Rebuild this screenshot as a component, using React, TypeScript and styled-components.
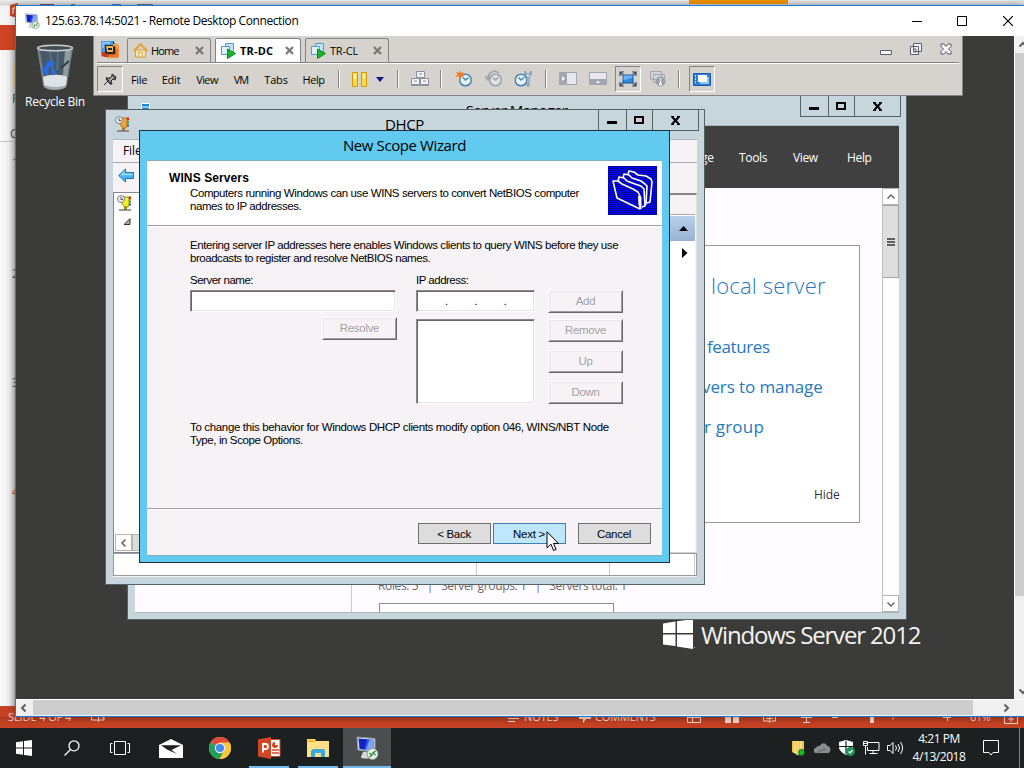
import React from "react";
import styled, { createGlobalStyle, css } from "styled-components";

const GlobalStyle = createGlobalStyle`
  html, body { margin: 0; padding: 0; overflow: hidden; }
  *, *::before, *::after { box-sizing: border-box; }
  svg { display: block; flex: none; }
`;

const ui = `"Open Sans", "Noto Sans", sans-serif`;
const dlg = `"Liberation Sans", Arial, sans-serif`;

/* ---------- screen ---------- */

const Screen = styled.div`
  width: 1024px;
  height: 768px;
  display: flex;
  flex-direction: column;
  overflow: hidden;
  font-family: ${ui};
  font-size: 12px;
  color: #000;
  white-space: nowrap;
  cursor: default;
`;

const Workspace = styled.div`
  position: relative;
  height: 728px;
  overflow: hidden;
`;

/* ---------- PowerPoint behind ---------- */

const Office = styled.div`
  height: 728px;
  display: flex;
  flex-direction: column;
  background: #f8f8f8;
`;
const OfficeTop = styled.div`
  height: 25px;
  padding-left: 9px;
  display: flex;
  background: linear-gradient(#ededed 0, #d3d3d3 5px, #f4f4f4 6px);
`;
const QuickMark = styled.div<{ $w: number; $gap: number; $color: string }>`
  width: ${(p) => p.$w}px;
  height: 1px;
  margin: 4px 0 0 ${(p) => p.$gap}px;
  background: ${(p) => p.$color};
`;
const ContextTab = styled.div`
  width: 99px;
  height: 4px;
  margin-left: 536px;
  background: #f39200;
`;
const OfficeTabs = styled.div`
  height: 25px;
  background: #cf4425;
`;
const OfficeSide = styled.div`
  flex: 1;
  width: 15px;
  display: flex;
  flex-direction: column;
  background: linear-gradient(90deg, #fafafa, #eeeeee 60%, #c2c2c2);
`;
const FolderEdge = styled.div`
  width: 2px;
  height: 24px;
  margin: 12px 0 0 13px;
  background: #e2bf7d;
`;
const SideGlyph = styled.div<{ $h: number; $red?: boolean; $left?: number }>`
  height: ${(p) => p.$h}px;
  padding-left: ${(p) => p.$left ?? 12}px;
  display: flex;
  align-items: flex-end;
  line-height: 14px;
  font-size: 12px;
  color: ${(p) => (p.$red ? "#cf4425" : "#444")};
`;
const SideRule = styled.div`
  height: 1px;
  background: #c4c4c4;
`;
const OfficeStatus = styled.div`
  height: 22px;
  display: flex;
  align-items: flex-start;
  padding-top: 2px;
  color: #f6d5cb;
  font-size: 11px;
  line-height: 17px;
  background: linear-gradient(#c44223 0, #c44223 10px, #b03a1e 11px, #c44223 18px);
`;
const StatusItem = styled.div<{ $w: number; $ls?: number }>`
  width: ${(p) => p.$w}px;
  height: 17px;
  display: flex;
  letter-spacing: ${(p) => p.$ls ?? 0}px;
`;

/* ---------- RDP window ---------- */

const RdpWindow = styled.div`
  position: absolute;
  left: 15px;
  top: 5px;
  width: 1009px;
  height: 712px;
  border: 1px solid #1a7ad0;
  border-right: 0;
  background: #fff;
  display: flex;
  flex-direction: column;
  box-shadow: 0 0 8px rgba(0, 0, 0, 0.3);
`;
const RdpTitle = styled.div`
  height: 30px;
  display: flex;
  align-items: center;
  padding-left: 8px;
`;
const RdpCaption = styled.span`
  margin: -1px 0 0 5px;
  flex: 1;
  letter-spacing: -0.41px;
`;
const RdpButton = styled.div<{ $w: number }>`
  width: ${(p) => p.$w}px;
  display: flex;
  justify-content: center;
`;
const RdpView = styled.div`
  height: 663px;
  display: flex;
`;
const RdpVScroll = styled.div`
  width: 10px;
  height: 663px;
  overflow: hidden;
  background: #f0f0f0;
  border-left: 1px solid #fff;
  display: flex;
  flex-direction: column;
`;
const RdpVArrow = styled.div<{ $top: number; $h: number }>`
  height: ${(p) => p.$h}px;
  flex: none;
  padding: ${(p) => p.$top}px 0 0 3px;
`;
const RdpVThumb = styled.div`
  height: 543px;
  flex: none;
  background: #cdcdcd;
`;
const RdpHScroll = styled.div`
  height: 17px;
  border-top: 1px solid #fff;
  background: #f0f0f0;
  display: flex;
  align-items: center;
`;
const RdpHThumb = styled.div`
  width: 940px;
  height: 15px;
  flex: none;
  background: #cdcdcd;
  margin-bottom: 1px;
`;
const HArrow = styled.div<{ $w: number; $left: number }>`
  width: ${(p) => p.$w}px;
  padding-left: ${(p) => p.$left}px;
`;

/* ---------- remote desktop ---------- */

const Desktop = styled.div`
  position: relative;
  width: 998px;
  height: 663px;
  background: #3b3b39;
  overflow: hidden;
`;
const RecycleBin = styled.div`
  position: absolute;
  left: 4px;
  top: 8px;
  width: 70px;
  display: flex;
  flex-direction: column;
  align-items: center;
  color: #fff;
  font-size: 12px;
  line-height: 16px;
  letter-spacing: -0.25px;
`;
const Brand = styled.div`
  position: absolute;
  left: 647px;
  top: 583px;
  display: flex;
  align-items: center;
  color: #f4f4f4;
  font-size: 24px;
  line-height: 32px;
  letter-spacing: -1.15px;
`;
const BrandText = styled.span`
  margin-left: 6px;
`;

const frame = css`
  position: absolute;
  display: flex;
  flex-direction: column;
`;
const ServerWindow = styled.div`
  ${frame}
  left: 111px;
  top: 59px;
  width: 780px;
  height: 525px;
  padding: 0 7px 6px;
  border: 1px solid #566366;
  background: #c6d6dc;
`;
const TitleBar = styled.div`
  height: 29px;
  flex: none;
  display: grid;
  grid-template-columns: 1fr 1fr 1fr;
  margin-right: -2px;
  font-size: 15px;
`;
const TitleIcon = styled.div<{ $top: number }>`
  padding: ${(p) => p.$top}px 0 0 2px;
`;
const TitleText = styled.div<{ $ls: number }>`
  text-align: center;
  line-height: 28px;
  letter-spacing: ${(p) => p.$ls}px;
  padding-right: 3px;
`;
const Controls = styled.div`
  justify-self: end;
  display: flex;
  width: 101px;
  height: 21px;
  border: 1px solid #566366;
  border-top: 0;
`;
const Control = styled.div<{ $w: number; $last?: boolean }>`
  width: ${(p) => p.$w}px;
  display: flex;
  align-items: center;
  justify-content: center;
  border-right: ${(p) => (p.$last ? "0" : "1px solid #566366")};
`;

const ServerBody = styled.div`
  height: 488px;
  flex: none;
  display: flex;
  flex-direction: column;
  border-top: 1px solid #aab6ba;
  border-bottom: 1px solid #a9b3b6;
  background: #fffbff;
`;
const ServerMenu = styled.div`
  height: 62px;
  flex: none;
  background: #404040;
  color: #fff;
  display: flex;
  justify-content: flex-end;
  align-items: center;
  padding: 1px 26px 0 0;
  font-size: 12px;
`;
const ServerMenuItem = styled.span<{ $w: number }>`
  width: ${(p) => p.$w}px;
  letter-spacing: -0.35px;
`;
const ServerMain = styled.div`
  height: 424px;
  display: flex;
  overflow: hidden;
`;
const ServerNav = styled.div`
  width: 217px;
  border-right: 1px solid #c9c9c9;
`;
const ServerContent = styled.div`
  flex: 1;
  padding: 57px 22px 0 26px;
  overflow: hidden;
`;
const WelcomeTile = styled.div`
  height: 278px;
  margin-left: 100px;
  border: 1px solid #999;
  background: #fff;
  padding: 23px 0 0 221px;
  color: #2479c2;
  display: flex;
  flex-direction: column;
`;
const WelcomeLink = styled.div<{ $size: number; $h: number; $left: number; $ls: number; $light?: boolean }>`
  font-size: ${(p) => p.$size}px;
  height: ${(p) => p.$h}px;
  line-height: 32px;
  margin-left: ${(p) => p.$left}px;
  letter-spacing: ${(p) => p.$ls}px;
  font-weight: ${(p) => (p.$light ? 300 : 400)};
`;
const HideLink = styled.div`
  font-size: 12px;
  line-height: 18px;
  color: #333;
  letter-spacing: -0.1px;
  margin: 35px 0 0 114px;
`;
const RolesLine = styled.div`
  margin-top: 55px;
  font-size: 12px;
  line-height: 16px;
  color: #6a6a6a;
  white-space: pre;
  letter-spacing: -0.36px;
`;
const RolesTile = styled.div`
  margin: 9px 0 0 1px;
  width: 235px;
  height: 20px;
  border: 1px solid #8b8b8b;
  background: #fff;
`;
const VScroll = styled.div`
  width: 17px;
  display: flex;
  flex-direction: column;
  border-left: 1px solid #c0c0c0;
  background: #fffdff;
`;
const VButton = styled.div`
  height: 17px;
  flex: none;
  border: 1px solid #b4b4b4;
  border-left: 0;
  background: #fff;
  display: flex;
  align-items: center;
  justify-content: center;
`;
const VThumb = styled.div`
  height: 73px;
  flex: none;
  margin-bottom: auto;
  border: 1px solid #a5a5a5;
  border-left: 0;
  background: #dedede;
  display: flex;
  align-items: center;
  justify-content: center;
`;

/* ---------- DHCP window ---------- */

const DhcpWindow = styled.div`
  ${frame}
  left: 89px;
  top: 73px;
  width: 600px;
  height: 476px;
  padding: 0 7px 7px;
  border: 1px solid #566366;
  background: #c6d6dc;
`;
const DhcpBody = styled.div`
  flex: 1;
  display: flex;
  flex-direction: column;
  border-top: 1px solid #aeb9bd;
  background: #f6f2f6;
`;
const DhcpMenu = styled.div`
  height: 23px;
  padding-left: 10px;
  border-bottom: 1px solid #a9a9a9;
  font-size: 12px;
  line-height: 22px;
  letter-spacing: -0.1px;
`;
const DhcpTools = styled.div`
  height: 29px;
  padding: 5px 0 0 5px;
`;
const DhcpPanes = styled.div`
  height: 361px;
  display: flex;
  justify-content: space-between;
`;
const TreePane = styled.div`
  width: 190px;
  border: 1px solid #828790;
  background: #fff;
  display: flex;
  flex-direction: column;
  padding: 1px 0 1px 1px;
`;
const TreeItems = styled.div`
  flex: 1;
  display: flex;
  flex-direction: column;
  gap: 6px;
  padding: 1px 0 0 2px;
`;
const TreeScroll = styled.div`
  display: flex;
  height: 17px;
`;
const TreeScrollPart = styled.div<{ $w: number; $thumb?: boolean }>`
  width: ${(p) => p.$w}px;
  border: 1px solid #b4b4b4;
  background: ${(p) => (p.$thumb ? "#dcdcdc" : "#fff")};
  display: flex;
  align-items: center;
  justify-content: center;
`;
const ActionPane = styled.div`
  width: 160px;
  margin-top: 1px;
  padding-right: 1px;
  border-right: 1px solid #e3dfe3;
  border-top: 2px solid #858387;
  border-bottom: 1px solid #d5d0d5;
  display: flex;
  flex-direction: column;
`;
const ActionHead = styled.div`
  height: 20px;
  border-bottom: 1px solid #a9a9a9;
`;
const ActionGroup = styled.div`
  height: 26px;
  border-top: 1px solid #fff;
  background: linear-gradient(#bad0ec, #97b2d4);
  display: flex;
  align-items: center;
  justify-content: flex-end;
  padding-right: 7px;
`;
const ActionBody = styled.div`
  flex: 1;
  background: #fff;
  display: flex;
  justify-content: flex-end;
  padding: 7px 7px 0 0;
`;
const DhcpStatus = styled.div`
  height: 23px;
  display: flex;
  border: 1px solid #9a9a9a;
  background: #fff;
`;
const StatusCell = styled.div<{ $w: number }>`
  width: ${(p) => p.$w}px;
  border-right: 1px solid #c8c8c8;
`;

/* ---------- wizard ---------- */

const Wizard = styled.div`
  ${frame}
  left: 123px;
  top: 94px;
  width: 531px;
  height: 433px;
  padding: 0 7px 6px;
  border: 1px solid #1d323d;
  background: #62caef;
  font-family: ${dlg};
  font-size: 11.5px;
  line-height: 13px;
`;
const WizardTitle = styled.div`
  height: 29px;
  font-family: ${ui};
  font-size: 15px;
  line-height: 29px;
  text-align: center;
  letter-spacing: -0.4px;
`;
const WizardBody = styled.div`
  flex: 1;
  display: flex;
  flex-direction: column;
  border-top: 1px solid #83adc0;
  border-bottom: 1px solid #83adc0;
  background: #f6f2f6;
`;
const WizardHeader = styled.div`
  height: 65px;
  padding: 5px 5px 0 22px;
  display: flex;
  justify-content: space-between;
  background: #fff;
  border-bottom: 1px solid #a0a0a0;
`;
const WizardHeadText = styled.div`
  padding-top: 5px;
`;
const WizardHeading = styled.div`
  font-weight: 700;
  height: 16px;
  font-size: 12px;
  line-height: 14px;
  letter-spacing: 0.1px;
`;
const Line = styled.div<{ $ls?: number }>`
  letter-spacing: ${(p) => p.$ls ?? -0.4}px;
`;
const Indent = styled.div`
  padding-left: 21px;
`;
const WizardForm = styled.div`
  height: 283px;
  padding: 12px 0 0 43px;
  border-top: 1px solid #fff;
  border-bottom: 1px solid #a0a0a0;
`;
const Fields = styled.div`
  display: grid;
  grid-template-columns: 226px 132px 75px;
  margin: 9px 0 17px;
`;
const FieldColumn = styled.div<{ $gap: number; $w: number }>`
  display: flex;
  flex-direction: column;
  width: ${(p) => p.$w}px;
  gap: ${(p) => p.$gap}px;
`;
const Label = styled.div`
  height: 16px;
  letter-spacing: -0.5px;
`;
const Box = styled.div<{ $w: number; $h: number }>`
  width: ${(p) => p.$w}px;
  height: ${(p) => p.$h}px;
  background: #fff;
  border: 1px solid;
  border-color: #8c888c #fff #fff #8c888c;
  box-shadow: inset 1px 1px 0 #696569, inset -1px -1px 0 #e6e2e6;
`;
const IpBox = styled(Box)`
  display: flex;
  align-items: center;
  padding-left: 28px;
  gap: 26px;
`;
const ClassicButton = styled.div`
  width: 75px;
  height: 23px;
  flex: none;
  align-self: flex-end;
  line-height: 20px;
  text-align: center;
  color: #a09ca0;
  letter-spacing: -0.3px;
  text-shadow: 1px 1px 0 #fff;
  border: 1px solid;
  border-color: #fff #696569 #696569 #fff;
  box-shadow: inset 1px 1px 0 #e8e4e8, inset -1px -1px 0 #a09ca0;
`;
const ButtonStack = styled.div`
  display: flex;
  flex-direction: column;
  gap: 8px;
  padding-top: 16px;
`;
const ButtonPair = styled.div`
  display: flex;
  flex-direction: column;
  gap: 6px;
`;
const WizardFooter = styled.div`
  flex: 1;
  border-top: 1px solid #fff;
  display: flex;
  justify-content: flex-end;
  padding: 13px 11px 0 0;
  gap: 2px;
`;
const FlatButton = styled.div<{ $hot?: boolean; $apart?: boolean }>`
  width: 73px;
  height: 21px;
  line-height: 20px;
  text-align: center;
  letter-spacing: -0.3px;
  padding-right: 1px;
  margin-left: ${(p) => (p.$apart ? 10 : 0)}px;
  border: 1px solid ${(p) => (p.$hot ? "#3c7fb1" : "#707070")};
  background: ${(p) => (p.$hot ? "#bee6fd" : "#dddddd")};
`;
const Pointer = styled.div`
  position: absolute;
  left: 530px;
  top: 495px;
`;

/* ---------- VMware bar ---------- */

const VmBar = styled.div`
  position: absolute;
  left: 77px;
  top: 0;
  width: 870px;
  height: 60px;
  padding: 0 3px;
  background: #d6d3ce;
  border: solid #848284;
  border-width: 0 1px 1px 1px;
  font-family: ${ui};
  font-size: 11px;
`;
const VmTabs = styled.div`
  height: 27px;
  display: flex;
  align-items: flex-end;
  border-bottom: 1px solid #848284;
  gap: 4px;
`;
const VmLogo = styled.div`
  width: 26px;
  align-self: flex-start;
  padding: 4px 0 0 4px;
`;
const VmTab = styled.div<{ $active?: boolean; $w: number }>`
  width: ${(p) => p.$w}px;
  height: 24px;
  display: flex;
  align-items: center;
  padding: 0 6px 0 5px;
  gap: 3px;
  border: 1px solid #848284;
  border-bottom: 0;
  border-radius: 2px 3px 0 0;
  background: ${(p) => (p.$active ? "#fff" : "transparent")};
  font-weight: ${(p) => (p.$active ? 700 : 400)};
`;
const VmTabName = styled.span<{ $ls?: number }>`
  flex: 1;
  letter-spacing: ${(p) => p.$ls ?? 0}px;
`;
const VmWindowButtons = styled.div`
  margin-left: auto;
  align-self: flex-start;
  display: flex;
  gap: 18px;
  padding: 7px 7px 0 0;
`;
const VmMenu = styled.div`
  height: 32px;
  display: flex;
  align-items: center;
  border-top: 1px solid #fff;
  padding-bottom: 1px;
`;
const VmSlot = styled.div<{ $w: number; $ls?: number }>`
  width: ${(p) => p.$w}px;
  display: flex;
  justify-content: center;
  letter-spacing: ${(p) => p.$ls ?? -0.2}px;
`;
const VmSunken = styled.div<{ $left?: number }>`
  width: 26px;
  height: 26px;
  margin-left: ${(p) => p.$left ?? 0}px;
  border: 1px solid;
  border-color: #848284 #fff #fff #848284;
  display: flex;
  align-items: center;
  justify-content: center;
`;
const VmSep = styled.div`
  width: 2px;
  height: 18px;
  background: #848284;
  border-right: 1px solid #fff;
`;

/* ---------- taskbar ---------- */

const Taskbar = styled.div`
  height: 40px;
  display: flex;
  background: #1c2020;
  color: #fff;
  padding-right: 4px;
`;
const Task = styled.div<{ $w: number; $active?: boolean }>`
  width: ${(p) => p.$w}px;
  height: 40px;
  display: flex;
  flex-direction: column;
  align-items: center;
  justify-content: center;
  background: ${(p) => (p.$active ? "#4a4e4f" : "transparent")};
`;
const RunningTask = styled(Task)`
  border-bottom: 2px solid #76b9ed;
  padding-top: 2px;
`;
const Tray = styled.div`
  margin-left: auto;
  display: flex;
  align-items: center;
`;
const TrayIcon = styled.div<{ $w: number }>`
  width: ${(p) => p.$w}px;
  display: flex;
  justify-content: center;
`;
const Clock = styled.div`
  width: 62px;
  text-align: center;
  font-size: 12px;
  line-height: 18px;
  letter-spacing: -0.45px;
`;
const ShowDesktop = styled.div`
  height: 40px;
  margin-left: 8px;
  border-left: 1px solid #7b7e7e;
`;

/* ---------- icons ---------- */

const RdpIcon = ({ size = 16 }: { size?: number }) => (
  <svg width={size} height={size} viewBox="0 0 24 24">
    <path d="M2 1l18 1.500v14L3 14z" fill="#dfe5ec" stroke="#8c97a3" />
    <path d="M3.500 2.500l15 1.300v11.400L4.500 13z" fill="#1423c4" />
    <path d="M13 3.300l5.500.5v11.400l-8-1.300z" fill="#7ea4f5" />
    <path d="M12.500 3.300l2 .2-3.500 10.500-2-.3z" fill="#3457e0" />
    <path d="M8 16h5l2 5c0 2-9 2-9 0z" fill="#d5d9dc" />
    <circle cx="17.500" cy="18" r="5.500" fill="#e9f1e9" stroke="#8a988a" />
    <path d="M14.500 17l2.500 2-2.500 2M20.500 15l-2.500 2 2.500 2" fill="none" stroke="#22882c" strokeWidth="1.500" />
  </svg>
);

const BinIcon = () => (
  <svg width="38" height="50" viewBox="0 0 38 50">
    <path d="M1 4l6 37c2 4 22 4 24 0l6-37z" fill="#737f86" />
    <path d="M4 7l5 30c3 3 17 3 20 0l4-30z" fill="#46586a" />
    <path d="M29 7h6l-5 33-4 2z" fill="#909ba1" />
    <path d="M14 8l3 18M22 8l-1 18" stroke="#5b6e7d" strokeWidth="2" />
    <path d="M7 33c5-3 20-3 24 0l-1 8c-4 4-18 4-22 0z" fill="#dfe2e4" />
    <path d="M11 18l4-2 4 3-2 4-5 1-2-3zM6 24l4-2 3 3-1 6-5-1zM15 26l4-1 1 5-4 1z" fill="#2a6be0" />
    <path d="M25 24l8-7" stroke="#2f3c46" strokeWidth="2" />
    <path d="M7 40c3 4 22 4 24 0l-1 3c-4 4-18 4-22 0z" fill="#a3abb0" />
    <ellipse cx="19" cy="4" rx="17.500" ry="2.800" fill="#454d52" stroke="#c5cfd4" strokeWidth="1.500" />
  </svg>
);

const WindowsFlag = () => (
  <svg width="32" height="30" viewBox="0 0 32 30">
    <path d="M0 3.500L12.500 1.500V13H0zM14 1.300L30 -1v14H14zM0 14.500h12.500V26L0 24.500zM14 14.500h16V29l-16-2.500z" fill="#fff" />
    <path d="M31 27.500h1" stroke="#aaa" />
  </svg>
);

const MinGlyph = () => <svg width="10" height="10"><path d="M0 6h10v3H0z" fill="#000" /></svg>;
const MaxGlyph = () => <svg width="10" height="10"><path d="M1 2h8v6H1z" fill="none" stroke="#000" strokeWidth="2" /></svg>;
const CloseGlyph = () => (
  <svg width="9" height="9" viewBox="0 0 9 9"><path d="M0 0h3v1.500l1.500 1.300L6 1.500V0h3v1L6 4.500 9 8v1H6V7.500L4.500 6 3 7.500V9H0V8l3-3.500L0 1z" fill="#000" /></svg>
);

const WindowControls = () => (
  <Controls>
    <Control $w={28}><MinGlyph /></Control>
    <Control $w={26}><MaxGlyph /></Control>
    <Control $w={45} $last><CloseGlyph /></Control>
  </Controls>
);

const Chevron = ({ dir, weight = 2 }: { dir: "up" | "down" | "left" | "right"; weight?: number }) => {
  const d = { up: "M1.500 6.500L5 3l3.500 3.500", down: "M1.500 3.500L5 7l3.500-3.500", left: "M6.500 1.500L3 5l3.500 3.500", right: "M3.500 1.500L7 5 3.500 8.500" }[dir];
  return <svg width="10" height="10"><path d={d} fill="none" stroke="#606060" strokeWidth={weight} /></svg>;
};

const DhcpIcon = ({ body, edge }: { body: string; edge: string }) => (
  <svg width="16" height="17" viewBox="0 0 16 17">
    <path d="M5 2h7v8l-1 2H8L5 9z" fill={body} stroke={edge} strokeWidth="1" />
    <path d="M12 1.500h2v3h-2z" fill="#e02020" />
    <path d="M12 5.500h2v2h-2z" fill="#20a040" />
    <path d="M12 8.500h2v2h-2z" fill="#2060d0" />
    <circle cx="4" cy="4" r="3.500" fill="#e8ecef" stroke="#7d8790" />
    <path d="M4 2v2.500h2" fill="none" stroke="#555" />
    <path d="M7 12h3v3H7z" fill={edge} />
    <path d="M2 15h12" stroke="#777" strokeWidth="1.500" />
  </svg>
);

const Folders = () => (
  <svg width="49" height="49" viewBox="0 0 49 49">
    <defs>
      <pattern id="dots" width="2" height="2" patternUnits="userSpaceOnUse">
        <rect width="1" height="1" fill="#000040" />
      </pattern>
    </defs>
    <rect width="49" height="49" fill="#0000ff" />
    <rect width="49" height="49" fill="url(#dots)" opacity="0.6" />
    <g fill="none" stroke="#fff" strokeWidth="1.600" strokeLinejoin="round">
      <path d="M20 8l1-3 5 1 4 3 8 1 5 3 1 3-2 20-3 1" />
      <path d="M15 12l1-4 5 1 3 3 9 3 4 3 2 2-1 18-2 1" />
      <path d="M10 15l1-4 5 1 3 3 8 3 6 2 3 3 1 17-3 1" />
      <path d="M5 15h5l4 3 11 5 5 3 2 4v13L9 32z" />
    </g>
    <path d="M30.500 30l2.500 1v12l-2-4z" fill="#fff" stroke="#fff" />
  </svg>
);

const CursorArrow = () => (
  <svg width="13" height="21" viewBox="0 0 13 21">
    <path d="M1 .8v16l4-3.600 2.500 6.300 2.600-1.100-2.600-6h5z" fill="#fff" stroke="#000" />
  </svg>
);

const VmwareLogo = () => (
  <svg width="18" height="18" viewBox="0 0 18 18" fill="none">
    <path d="M1 3l3-2h9v2l4 2v12h-4l-9 0-3-3z" fill="#2b2222" />
    <path d="M2 13V3h10" stroke="#4a9ee6" strokeWidth="4" />
    <path d="M2 8V3h7" stroke="#9ccdf2" strokeWidth="1.500" />
    <path d="M16 5v11H6" stroke="#ef7a1e" strokeWidth="3.500" />
    <path d="M2 12v3h4v2" stroke="#c8401f" strokeWidth="3" />
    <path d="M12 5h4v4" stroke="#f8a13a" strokeWidth="2.500" />
    <path d="M5 6h7v6H6z" fill="#f6b25c" />
    <path d="M7 8h4v2H7z" fill="#20283c" />
  </svg>
);
const HomeIcon = () => (
  <svg width="15" height="15" viewBox="0 0 15 15">
    <path d="M2.500 7v7h10V7z" fill="#fbe3a4" stroke="#dda032" />
    <path d="M.7 8L7.500 1 14.300 8" fill="none" stroke="#e3a336" strokeWidth="2" />
    <path d="M6 9.500h3V14H6z" fill="#fff" stroke="#dda032" />
  </svg>
);
const VmIcon = () => (
  <svg width="16" height="16" viewBox="0 0 16 16">
    <path d="M4.500.5h8v8h-8z" fill="#bfe4fa" stroke="#4d9ed0" />
    <path d="M.5 3.500h8v8h-8z" fill="#dff2fd" stroke="#4d9ed0" />
    <path d="M6.500 6l8 4.500-8 5z" fill="#19b52b" stroke="#108a1d" />
  </svg>
);
const TabClose = () => (
  <svg width="9" height="9" viewBox="0 0 9 9"><path d="M1 1l7 7M8 1L1 8" stroke="#777" strokeWidth="2.200" /></svg>
);
const PinIcon = () => (
  <svg width="14" height="13" viewBox="0 0 14 13">
    <path d="M9 1l4 3-1 3-2-1-2 2 1 3-2 0-4-5 2-1h2l2-2z" fill="#a8a8a8" stroke="#222" />
    <path d="M5 8l-4 4M3 4l5 7M9 1l3 5M6 6l2-2" stroke="#222" />
  </svg>
);
const PauseIcon = () => (
  <svg width="15" height="15">
    <path d="M.5.5h5v14h-5zM9.500.5h5v14h-5z" fill="#ffd83d" stroke="#cf9a10" />
    <path d="M2 2h2v5H2zM11 2h2v5h-2z" fill="#fff2b0" />
  </svg>
);
const BoxesIcon = () => (
  <svg width="18" height="16" viewBox="0 0 18 16">
    <g fill="#f2f3f6" stroke="#8a90a0">
      <path d="M5.500.5h8v6h-8zM.5 7.500h8v6h-8zM9.500 7.500h8v6h-8z" />
    </g>
    <path d="M8 3h3M3 10h3M12 10h3M0 14.500h18" stroke="#8a90a0" />
  </svg>
);
const ClockFace = ({ tone, fill }: { tone: string; fill: string }) => (
  <g>
    <circle cx="10.500" cy="10" r="5.800" fill={fill} stroke={tone} strokeWidth="1.500" />
    <path d="M8 7.500l2.500 2.500 3-2.500" fill="none" stroke={tone} strokeWidth="1.500" />
  </g>
);
const SnapshotIcon = () => (
  <svg width="18" height="18" viewBox="0 0 18 18">
    <ClockFace tone="#4d83aa" fill="#e6f3fb" />
    <path d="M5 0l1 3 3-1-2 3 2 2-3-.5L5 9.500 4 6.500 0 7l2.500-2L1 2l3 1z" fill="#ff7b1a" />
  </svg>
);
const RevertIcon = () => (
  <svg width="18" height="18" viewBox="0 0 18 18">
    <ClockFace tone="#9da2aa" fill="#dfe1e4" />
    <path d="M14 3C9-1 3 3 3 8M0 6l3 4 3-4" fill="none" stroke="#9da2aa" strokeWidth="1.600" />
  </svg>
);
const WrenchIcon = () => (
  <svg width="18" height="18" viewBox="0 0 18 18">
    <g transform="translate(-3.500 0)"><ClockFace tone="#4d83aa" fill="#e6f3fb" /></g>
    <path d="M11 1v4l2 2v9h2V7l2-2V1l-1 3h-4z" fill="#c9dcec" stroke="#5a87aa" strokeWidth=".9" />
  </svg>
);
const SidePanelIcon = ({ bottom }: { bottom?: boolean }) => (
  <svg width="18" height="14" viewBox="0 0 18 14">
    <path d="M.5.5h17v12H.5z" fill="#e8e8ec" stroke="#a0a5b0" />
    {bottom ? <path d="M1 7h16v6H1z" fill="#a0a5b0" /> : <path d="M1 1h7v12H1z" fill="#a0a5b0" />}
    {bottom ? <path d="M7 11l2-2.500L11 11z" fill="#fff" /> : <path d="M3 4l3 2.500L3 9z" fill="#fff" />}
  </svg>
);
const FullScreenIcon = () => (
  <svg width="18" height="16" viewBox="0 0 18 16">
    <path d="M4 4h10v8H4z" fill="#2f86e0" stroke="#1b55a5" />
    <path d="M4.500 4.500h9v2l-9 3z" fill="#6ab2f4" />
    <path d="M1 5V1h4M13 1h4v4M17 11v4h-4M5 15H1v-4M1 1l3 3M17 1l-3 3M17 15l-3-3M1 15l3-3" fill="none" stroke="#33475c" strokeWidth="1.200" />
  </svg>
);
const InfoIcon = () => (
  <svg width="16" height="16" viewBox="0 0 16 16">
    <path d="M.5.5h11v8H.5zM3.500 3.500h11v8h-11z" fill="#d2d4d8" stroke="#a3a7b0" />
    <circle cx="10.500" cy="10.500" r="5" fill="#9b9fa8" />
    <path d="M10.500 7v1.500M10.500 9.500V14M9 13.500h3" stroke="#fff" strokeWidth="1.500" />
  </svg>
);
const UnityIcon = () => (
  <svg width="18" height="13" viewBox="0 0 18 13">
    <path d="M.5.5h17v12H.5z" fill="#2a7ddc" stroke="#1c5cb0" />
    <path d="M7 4h9v7H7z" fill="#8dc3f5" />
    <path d="M5 2h9v7H5z" fill="#fff" />
    <path d="M2 3h1M2 6h1M2 9h1" stroke="#fff" strokeWidth="1.500" />
  </svg>
);

const BackArrow = () => (
  <svg width="16" height="15" viewBox="0 0 16 15">
    <path d="M.7 7.500L7.500 1v3.500h8v6h-8V14z" fill="#4bb3ef" stroke="#1d73bd" />
    <path d="M2 7.200L6.500 3v2.500h8v1.700z" fill="#9edaf9" />
  </svg>
);

const ChromeIcon = () => (
  <svg width="22" height="22" viewBox="0 0 22 22">
    <circle cx="11" cy="11" r="11" fill="#fbc937" />
    <path d="M11 11L1.500 5.500A11 11 0 0 1 20.500 5.500z" fill="#de4b3b" />
    <path d="M1.500 5.500A11 11 0 0 0 10.500 22l5-8.500-4.500-2.500z" fill="#1fa15d" />
    <path d="M11 5.500h9.500a11 11 0 0 1-10 16.500l5-8.500z" fill="#fbc937" />
    <circle cx="11" cy="11" r="5.200" fill="#f1f1f1" />
    <circle cx="11" cy="11" r="4.100" fill="#4688f1" />
  </svg>
);
const PptIcon = () => (
  <svg width="23" height="22" viewBox="0 0 23 22">
    <path d="M12 2.500h10v17H12z" fill="#fff" stroke="#d24625" />
    <path d="M14 13h7M14 16h7" stroke="#d24625" strokeWidth="1.500" />
    <path d="M17 5a3 3 0 1 0 3 3h-3z" fill="#d24625" />
    <path d="M0 2.500L13 0v22L0 19.500z" fill="#d24625" />
    <path d="M5 15.500V7h2.500a2.300 2.300 0 0 1 0 5H5" fill="none" stroke="#fff" strokeWidth="1.800" />
  </svg>
);
const ExplorerIcon = () => (
  <svg width="22" height="19" viewBox="0 0 22 19">
    <path d="M0 0h8l1 2h13v16H0z" fill="#fddf86" />
    <path d="M1 1h7v2H1z" fill="#f5b927" />
    <path d="M4 18v-6l2-2h11l1 2v6h-4v-4H8v4z" fill="#35a9e0" />
  </svg>
);
const MailIcon = () => (
  <svg width="24" height="19" viewBox="0 0 24 19">
    <path d="M0 6l12-6 12 6v13H0z" fill="#fff" />
    <path d="M2 6.200h20L12.500 11l5.500 4-10-4.500z" fill="#1c2020" />
  </svg>
);
const StartIcon = () => (
  <svg width="16" height="16" viewBox="0 0 16 16">
    <path d="M0 2.200L7 1.200v6.300H0zM8 1l8-1v7.500H8zM0 8.500h7v6.300l-7-1zM8 8.500h8V16l-8-1z" fill="#fff" />
  </svg>
);
const SearchIcon = () => (
  <svg width="16" height="16" viewBox="0 0 16 16" fill="none" stroke="#fff" strokeWidth="1.300">
    <circle cx="10" cy="5.800" r="5" />
    <path d="M6.500 9.500L.5 15.500" />
  </svg>
);
const TaskViewIcon = () => (
  <svg width="20" height="14" viewBox="0 0 20 14" fill="none" stroke="#fff">
    <path d="M4.500.5h11v13h-11zM2.500 2.500h-2v9h2M17.500 2.500h2v9h-2" />
  </svg>
);

const TrayShield = () => (
  <svg width="13" height="15" viewBox="0 0 13 15">
    <path d="M0 0h12v10l-6 4.500L0 11z" fill="#f0c34c" />
    <path d="M3 0v12M6 0v14M9 0v12" stroke="#fff1b8" />
    <circle cx="9.500" cy="11.500" r="3" fill="#1fb52c" stroke="#0c6c17" />
  </svg>
);
const CloudIcon = () => (
  <svg width="17" height="11" viewBox="0 0 17 11">
    <path d="M2 10a2.500 2.500 0 0 1 0-5C3 3 5 2.500 6 3c1-3 6-4 7 0 3 0 4 3 3 5l-1 2z" fill="#8c8f90" />
    <path d="M4 10.500c0-3 3-3.500 4-2.500 1-3 4-2 4 0" fill="none" stroke="#585c5c" />
  </svg>
);
const DefenderIcon = () => (
  <svg width="16" height="16" viewBox="0 0 16 16">
    <path d="M7 0l7 2v5c0 4-4 6-7 8-3-2-7-4-7-8V2z" fill="#fff" />
    <path d="M7 1v13M0 6.500h14" stroke="#1c2020" strokeWidth="1.200" />
    <circle cx="11.500" cy="11.500" r="4.500" fill="#159553" />
    <path d="M9.500 11.500l1.500 1.500 2.500-3" fill="none" stroke="#fff" strokeWidth="1.200" />
  </svg>
);
const NetworkIcon = () => (
  <svg width="17" height="14" viewBox="0 0 17 14" fill="none" stroke="#fff">
    <path d="M5 1.500h11v8H4.500V6M10 9.500v3M6.500 12.500h8M.5.500h4v4h-4zM2.500 4.500v9M.5 2.500h4" />
  </svg>
);
const VolumeIcon = () => (
  <svg width="17" height="14" viewBox="0 0 17 14" fill="none" stroke="#fff">
    <path d="M.5 4.500h2.500l3-3v11l-3-3H.500zM8.500 4.500q2 2.500 0 5M11 3q3 4 0 8M13.500 1q4 6 0 12" />
  </svg>
);
const ActionCenterIcon = () => (
  <svg width="16" height="16" viewBox="0 0 16 16" fill="none" stroke="#fff">
    <path d="M.5.500h15v12h-5.500L8 15 6 12.500H.500z" />
  </svg>
);

/* ---------- page ---------- */

const PowerPoint = () => (
  <Office>
    <OfficeTop>
      <svg width="16" height="20" viewBox="0 0 16 20"><path d="M1 5l8-2v15l-8-2z" fill="#cf4425" /><path d="M4 14V8h3" fill="none" stroke="#fff" /></svg>
      <QuickMark $w={14} $gap={15} $color="#80397b" />
      <QuickMark $w={4} $gap={17} $color="#4a7ebb" />
      <QuickMark $w={9} $gap={37} $color="#4a7ebb" />
      <QuickMark $w={16} $gap={16} $color="#777" />
      <ContextTab />
    </OfficeTop>
    <OfficeTabs />
    <OfficeSide>
      <FolderEdge />
      <SideGlyph $h={20}>P</SideGlyph>
      <SideGlyph $h={35} $left={10}>C</SideGlyph>
      <SideRule />
      <SideGlyph $h={28}>1</SideGlyph>
      <SideGlyph $h={111}>2</SideGlyph>
      <SideGlyph $h={109}>3</SideGlyph>
      <SideGlyph $h={109} $red>4</SideGlyph>
    </OfficeSide>
    <OfficeStatus>
      <StatusItem $w={8} />
      <StatusItem $w={83} $ls={-0.1}>SLIDE 4 OF 4</StatusItem>
      <StatusItem $w={416}>
        <svg width="14" height="15" viewBox="0 0 14 15" fill="none" stroke="#f6d5cb"><path d="M.5 5v7h6l1 1.500V6M7.500 12H13V8M9 7l4 4" /></svg>
      </StatusItem>
      <StatusItem $w={17}>
        <svg width="12" height="16" stroke="#f6d5cb"><path d="M1 7.500h8M1 10.500h11M1 13.500h7" /></svg>
      </StatusItem>
      <StatusItem $w={55} $ls={-0.1}>NOTES</StatusItem>
      <StatusItem $w={16}>
        <svg width="12" height="16"><path d="M0 4h12v7H7l-3 4v-4H0z" fill="#f6d5cb" /></svg>
      </StatusItem>
      <StatusItem $w={92} $ls={-0.15}>COMMENTS</StatusItem>
      <StatusItem $w={283}>
        <svg width="283" height="17" viewBox="0 0 283 17" fill="none" stroke="#f6d5cb">
          <path d="M.5 4.500h13v10H.5zM1 9.500h13M5.500 5v10" />
          <path d="M38 4h6v11h-6zM46 4h6v11h-6z" fill="#f6d5cb" stroke="none" />
          <path d="M76.500 4v9h5l1.500 1.500 1.500-1.500h4V4M82.500 4v10M79 10.500h7" />
          <path d="M114 9.500h11M119.500 9.500v5M116 14.500h7M145 9.500h6M206 9.500v2M256 9.500h8M260.500 5v8" />
          <path d="M183 4h4v11h-4z" fill="#f6d5cb" stroke="none" />
        </svg>
      </StatusItem>
      <StatusItem $w={34} $ls={-0.5}>61%</StatusItem>
      <svg width="14" height="17" viewBox="0 0 14 17" fill="none" stroke="#f6d5cb"><path d="M.5 4.500h13v11H.5zM7 8v6M4 11h6" /></svg>
    </OfficeStatus>
  </Office>
);

const ServerManager = () => (
  <ServerWindow>
    <TitleBar>
      <TitleIcon $top={7}>
        <svg width="17" height="12" viewBox="-4 0 17 12"><path d="M.5.500h8v10h-8z" fill="#1b86dc" stroke="#fff" /><path d="M1 4h7" stroke="#fff" /></svg>
      </TitleIcon>
      <TitleText $ls={-0.65}>Server Manager</TitleText>
      <WindowControls />
    </TitleBar>
    <ServerBody>
      <ServerMenu>
        <ServerMenuItem $w={38}>ge</ServerMenuItem>
        <ServerMenuItem $w={54}>Tools</ServerMenuItem>
        <ServerMenuItem $w={54}>View</ServerMenuItem>
        <ServerMenuItem $w={26}>Help</ServerMenuItem>
      </ServerMenu>
      <ServerMain>
        <ServerNav />
        <ServerContent>
          <WelcomeTile>
            <WelcomeLink $size={22} $h={62} $left={11} $ls={0.2} $light>local server</WelcomeLink>
            <WelcomeLink $size={17} $h={40} $left={7} $ls={-0.4}>features</WelcomeLink>
            <WelcomeLink $size={17} $h={40} $left={2} $ls={-0.1}>vers to manage</WelcomeLink>
            <WelcomeLink $size={17} $h={40} $left={4} $ls={0.2}>r group</WelcomeLink>
            <HideLink>Hide</HideLink>
          </WelcomeTile>
          <RolesLine>{"Roles: 5   |   Server groups: 1   |   Servers total: 1"}</RolesLine>
          <RolesTile />
        </ServerContent>
        <VScroll>
          <VButton><Chevron dir="up" weight={1.4} /></VButton>
          <VThumb><svg width="8" height="8"><path d="M0 1h8M0 4h8M0 7h8" stroke="#606060" strokeWidth="2" /></svg></VThumb>
          <VButton><Chevron dir="down" weight={1.4} /></VButton>
        </VScroll>
      </ServerMain>
    </ServerBody>
  </ServerWindow>
);

const Dhcp = () => (
  <DhcpWindow>
    <TitleBar>
      <TitleIcon $top={6}><DhcpIcon body="#eba63a" edge="#b5761a" /></TitleIcon>
      <TitleText $ls={-0.3}>DHCP</TitleText>
      <WindowControls />
    </TitleBar>
    <DhcpBody>
      <DhcpMenu>File</DhcpMenu>
      <DhcpTools><BackArrow /></DhcpTools>
      <DhcpPanes>
        <TreePane>
          <TreeItems>
            <DhcpIcon body="#f6f02a" edge="#8c8a10" />
            <svg width="18" height="7"><path d="M13 .7v5.800H7z" fill="#aaa" stroke="#333" /></svg>
          </TreeItems>
          <TreeScroll>
            <TreeScrollPart $w={17}><Chevron dir="left" weight={1.5} /></TreeScrollPart>
            <TreeScrollPart $w={90} $thumb />
          </TreeScroll>
        </TreePane>
        <ActionPane>
          <ActionHead />
          <ActionGroup><svg width="9" height="5"><path d="M0 5l4.500-5L9 5z" /></svg></ActionGroup>
          <ActionBody><svg width="6" height="10"><path d="M0 0l5.500 5L0 10z" /></svg></ActionBody>
        </ActionPane>
      </DhcpPanes>
      <DhcpStatus>
        <StatusCell $w={363} />
        <StatusCell $w={133} />
        <StatusCell $w={85} />
      </DhcpStatus>
    </DhcpBody>
  </DhcpWindow>
);

const ScopeWizard = () => (
  <Wizard>
    <WizardTitle>New Scope Wizard</WizardTitle>
    <WizardBody>
      <WizardHeader>
        <WizardHeadText>
          <WizardHeading>WINS Servers</WizardHeading>
          <Indent>
            <Line>Computers running Windows can use WINS servers to convert NetBIOS computer</Line>
            <Line $ls={-0.42}>names to IP addresses.</Line>
          </Indent>
        </WizardHeadText>
        <Folders />
      </WizardHeader>
      <WizardForm>
        <Line $ls={-0.41}>Entering server IP addresses here enables Windows clients to query WINS before they use</Line>
        <Line $ls={-0.46}>broadcasts to register and resolve NetBIOS names.</Line>
        <Fields>
          <FieldColumn $w={207} $gap={0}>
            <Label>Server name:</Label>
            <FieldColumn $w={207} $gap={5}>
              <Box $w={206} $h={22} />
              <ClassicButton>Resolve</ClassicButton>
            </FieldColumn>
          </FieldColumn>
          <FieldColumn $w={119} $gap={0}>
            <Label>IP address:</Label>
            <FieldColumn $w={119} $gap={7}>
              <IpBox $w={119} $h={22}><span>.</span><span>.</span><span>.</span></IpBox>
              <Box $w={119} $h={85} />
            </FieldColumn>
          </FieldColumn>
          <ButtonStack>
            <ButtonPair>
              <ClassicButton>Add</ClassicButton>
              <ClassicButton>Remove</ClassicButton>
            </ButtonPair>
            <ClassicButton>Up</ClassicButton>
            <ClassicButton>Down</ClassicButton>
          </ButtonStack>
        </Fields>
        <Line $ls={-0.34}>To change this behavior for Windows DHCP clients modify option 046, WINS/NBT Node</Line>
        <Line>Type, in Scope Options.</Line>
      </WizardForm>
      <WizardFooter>
        <FlatButton>&lt; Back</FlatButton>
        <FlatButton $hot>Next &gt;</FlatButton>
        <FlatButton $apart>Cancel</FlatButton>
      </WizardFooter>
    </WizardBody>
  </Wizard>
);

const VmwareBar = () => (
  <VmBar>
    <VmTabs>
      <VmLogo><VmwareLogo /></VmLogo>
      <VmTab $w={84}><HomeIcon /><VmTabName $ls={-0.9}>Home</VmTabName><TabClose /></VmTab>
      <VmTab $w={86} $active><VmIcon /><VmTabName $ls={0.2}>TR-DC</VmTabName><TabClose /></VmTab>
      <VmTab $w={84}><VmIcon /><VmTabName $ls={-0.2}>TR-CL</VmTabName><TabClose /></VmTab>
      <VmWindowButtons>
        <svg width="12" height="12"><path d="M.5 7.500h11v4H.5z" fill="#fff" stroke="#5a5a72" /></svg>
        <svg width="12" height="12"><path d="M3.500.500h8v8h-8zM.5 3.500h8v8h-8z" fill="#f4f4f8" stroke="#5a5a72" /><path d="M3.500 6h2.500v3H3.500z" fill="none" stroke="#5a5a72" /></svg>
        <svg width="12" height="12" viewBox="0 0 12 12"><path d="M1 1h3l2 2.500L8 1h3v2.500L8.500 6 11 8.500V11H8L6 8.500 4 11H1V8.500L3.500 6 1 3.500z" fill="#fff" stroke="#5a5064" /></svg>
      </VmWindowButtons>
    </VmTabs>
    <VmMenu>
      <VmSunken><PinIcon /></VmSunken>
      <VmSlot $w={32} $ls={-0.3}>File</VmSlot>
      <VmSlot $w={32}>Edit</VmSlot>
      <VmSlot $w={40} $ls={-0.6}>View</VmSlot>
      <VmSlot $w={28} $ls={-1}>VM</VmSlot>
      <VmSlot $w={42}>Tabs</VmSlot>
      <VmSlot $w={33} $ls={-0.5}>Help</VmSlot>
      <VmSlot $w={18}><VmSep /></VmSlot>
      <VmSlot $w={23}><PauseIcon /></VmSlot>
      <VmSlot $w={18}><svg width="8" height="5"><path d="M0 0h8L4 5z" fill="#14148c" /></svg></VmSlot>
      <VmSlot $w={18}><VmSep /></VmSlot>
      <VmSlot $w={26}><BoxesIcon /></VmSlot>
      <VmSlot $w={16}><VmSep /></VmSlot>
      <VmSlot $w={30}><SnapshotIcon /></VmSlot>
      <VmSlot $w={30}><RevertIcon /></VmSlot>
      <VmSlot $w={28}><WrenchIcon /></VmSlot>
      <VmSlot $w={18}><VmSep /></VmSlot>
      <VmSlot $w={26}><SidePanelIcon /></VmSlot>
      <VmSlot $w={34}><SidePanelIcon bottom /></VmSlot>
      <VmSunken><FullScreenIcon /></VmSunken>
      <VmSlot $w={34}><InfoIcon /></VmSlot>
      <VmSlot $w={8}><VmSep /></VmSlot>
      <VmSunken $left={6}><UnityIcon /></VmSunken>
    </VmMenu>
  </VmBar>
);

export default function App() {
  return (
    <Screen>
      <GlobalStyle />
      <Workspace>
        <PowerPoint />
        <RdpWindow>
          <RdpTitle>
            <RdpIcon />
            <RdpCaption>125.63.78.14:5021 - Remote Desktop Connection</RdpCaption>
            <RdpButton $w={30}><svg width="10" height="10"><path d="M0 5.500h10" stroke="#000" /></svg></RdpButton>
            <RdpButton $w={60}><svg width="10" height="10"><path d="M.5.500h9v9h-9z" fill="none" stroke="#000" /></svg></RdpButton>
            <RdpButton $w={32}><svg width="10" height="10"><path d="M0 0l10 10M10 0L0 10" stroke="#000" strokeWidth="1.200" /></svg></RdpButton>
          </RdpTitle>
          <RdpView>
            <Desktop>
              <RecycleBin><BinIcon />Recycle Bin</RecycleBin>
              <Brand><WindowsFlag /><BrandText>Windows Server 2012</BrandText></Brand>
              <ServerManager />
              <VmwareBar />
              <Dhcp />
              <ScopeWizard />
              <Pointer><CursorArrow /></Pointer>
            </Desktop>
            <RdpVScroll>
              <RdpVArrow $top={4} $h={17}><Chevron dir="up" /></RdpVArrow>
              <RdpVThumb />
              <RdpVArrow $top={90} $h={103}><Chevron dir="down" /></RdpVArrow>
            </RdpVScroll>
          </RdpView>
          <RdpHScroll>
            <HArrow $w={17} $left={3}><Chevron dir="left" /></HArrow>
            <RdpHThumb />
            <HArrow $w={51} $left={28}><Chevron dir="right" /></HArrow>
          </RdpHScroll>
        </RdpWindow>
      </Workspace>
      <Taskbar>
        <Task $w={48}><StartIcon /></Task>
        <Task $w={48}><SearchIcon /></Task>
        <Task $w={48}><TaskViewIcon /></Task>
        <Task $w={54}><MailIcon /></Task>
        <Task $w={44}><ChromeIcon /></Task>
        <Task $w={7} />
        <RunningTask $w={40}><PptIcon /></RunningTask>
        <Task $w={9} />
        <RunningTask $w={40}><ExplorerIcon /></RunningTask>
        <Task $w={5} />
        <RunningTask $w={48} $active><RdpIcon size={24} /></RunningTask>
        <Tray>
          <TrayIcon $w={24}><TrayShield /></TrayIcon>
          <TrayIcon $w={25}><CloudIcon /></TrayIcon>
          <TrayIcon $w={24}><DefenderIcon /></TrayIcon>
          <TrayIcon $w={24}><NetworkIcon /></TrayIcon>
          <TrayIcon $w={25}><VolumeIcon /></TrayIcon>
          <Clock>4:21 PM<br />4/13/2018</Clock>
          <TrayIcon $w={41}><ActionCenterIcon /></TrayIcon>
          <ShowDesktop />
        </Tray>
      </Taskbar>
    </Screen>
  );
}
